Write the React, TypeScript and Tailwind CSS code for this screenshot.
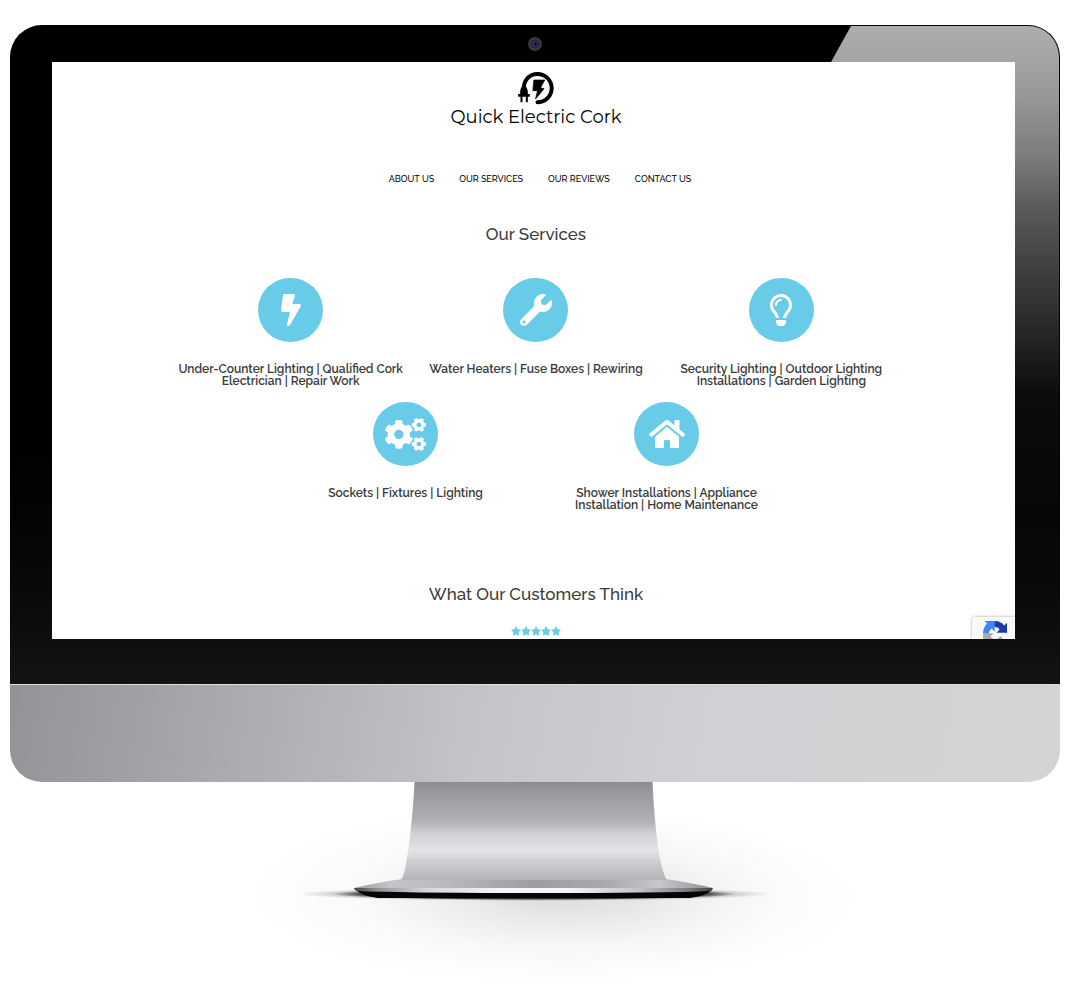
import React from "react";
import {
  FaBolt,
  FaCogs,
  FaHome,
  FaRegLightbulb,
  FaStar,
  FaWrench,
} from "react-icons/fa";

type Service = { icon: React.ReactNode; lines: string[] };

const primaryServices: Service[] = [
  {
    icon: <FaBolt size={32} />,
    lines: ["Under-Counter Lighting | Qualified Cork", "Electrician | Repair Work"],
  },
  { icon: <FaWrench size={32} />, lines: ["Water Heaters | Fuse Boxes | Rewiring"] },
  {
    icon: <FaRegLightbulb size={32} />,
    lines: ["Security Lighting | Outdoor Lighting", "Installations | Garden Lighting"],
  },
];

const secondaryServices: Service[] = [
  { icon: <FaCogs size={41} />, lines: ["Sockets | Fixtures | Lighting"] },
  {
    icon: <FaHome size={36} />,
    lines: ["Shower Installations | Appliance", "Installation | Home Maintenance"],
  },
];

const navItems = [
  { label: "ABOUT US", href: "#about" },
  { label: "OUR SERVICES", href: "#services" },
  { label: "OUR REVIEWS", href: "#reviews" },
  { label: "CONTACT US", href: "#contact" },
];

function LogoMark() {
  return (
    <svg viewBox="258 138 116 102" className="h-[34px] w-[39px]" aria-hidden="true">
      <path
        d="M281 192 C280 165 298 147 322 147 A42.500 42.500 0 1 1 322 232"
        fill="none"
        stroke="#000"
        strokeWidth="12"
        strokeLinecap="round"
      />
      <path d="M273 187h16l4 10v10h6v8h-6v17h-6v-17h-10v17h-6v-17h-7v-8h6v-10z" />
      <path d="M311 165h33l-13 23 11 3-26 31 6-25h-14z" stroke="#000" strokeWidth="2" />
    </svg>
  );
}

function ServiceItem({ icon, lines }: Service) {
  return (
    <li className="flex flex-col items-center text-center">
      <span className="flex h-16 w-[65px] items-center justify-center rounded-full bg-[#68cbe8] text-white">
        {icon}
      </span>
      <h3 className="mt-[21px] text-[12px] leading-3 font-semibold whitespace-nowrap text-[#3a3a3a]">
        {lines.map((line) => (
          <span key={line} className="block">
            {line}
          </span>
        ))}
      </h3>
    </li>
  );
}

function CaptchaBadge() {
  const arrow =
    "M64 31.955c-.002-.46-.012-.918-.032-1.373V4.439l-7.23 7.23C50.823 4.469 41.893 0 31.92 0 21.542 0 12.322 4.84 6.457 12.34l11.85 11.975a15.7 15.7 0 0 1 4.796-5.381c2.068-1.613 4.996-2.931 8.816-2.931.461 0 .817.054 1.079.155 4.732.374 8.834 2.985 11.249 6.775l-8.388 8.388c10.624-.042 22.626-.066 28.121.634z";
  return (
    <div className="absolute right-0 bottom-0 h-[22px] w-[43px] overflow-hidden rounded-tl-xs bg-[#f9f9f9] pt-1 pl-[11px] shadow-[0_0_3px_#a0a0a0]">
      <svg viewBox="0 0 64 64" className="size-6" aria-hidden="true">
        <path d={arrow} fill="#1c3aa9" />
        <path d={arrow} fill="#4285f4" transform="rotate(-90 32 32)" />
        <path d={arrow} fill="#ababab" transform="rotate(180 32 32)" />
      </svg>
    </div>
  );
}

function Website() {
  return (
    <div className="relative aspect-[963/577] overflow-hidden bg-white font-['Raleway','Lato',sans-serif] text-[#3a3a3a]">
      <div className="pl-[5px]">
        <header className="flex flex-col items-center pt-[9px]">
          <a href="#home" className="flex flex-col items-center text-black">
            <LogoMark />
            <span className="font-['Montserrat','Inter',sans-serif] text-[18px] leading-6 font-normal">
              Quick Electric Cork
            </span>
          </a>
          <nav className="mt-11 flex gap-[25px] pl-2 text-[9px] leading-3 font-medium text-black">
            {navItems.map((item) => (
              <a key={item.href} href={item.href}>
                {item.label}
              </a>
            ))}
          </nav>
        </header>
        <section id="services" className="mt-[37px]">
          <h2 className="text-center text-[17px] leading-6 font-medium">Our Services</h2>
          <ul className="mx-auto mt-8 grid max-w-[736px] grid-cols-3">
            {primaryServices.map((service) => (
              <ServiceItem key={service.lines[0]} {...service} />
            ))}
          </ul>
          <ul className="mx-auto mt-[15px] grid max-w-[522px] grid-cols-2">
            {secondaryServices.map((service) => (
              <ServiceItem key={service.lines[0]} {...service} />
            ))}
          </ul>
        </section>
        <section id="reviews" className="mt-[71px]">
          <h2 className="text-center text-[17px] leading-6 font-medium">What Our Customers Think</h2>
          <div className="mt-5 flex justify-center text-[#68cbe8]" role="img" aria-label="5 out of 5">
            {[1, 2, 3, 4, 5].map((n) => (
              <FaStar key={n} size={10} />
            ))}
          </div>
        </section>
      </div>
      <CaptchaBadge />
    </div>
  );
}

function Webcam() {
  return (
    <svg viewBox="0 0 14 14" className="size-3.5" aria-hidden="true">
      <circle cx="7" cy="7" r="7" fill="#39393b" />
      <circle cx="7" cy="7" r="4.500" fill="#2a2a2c" />
      <circle cx="7" cy="7" r="2.500" fill="#3a1a9c" />
      <circle cx="7.300" cy="7.300" r="1.200" fill="#05050c" />
    </svg>
  );
}

function Stand() {
  return (
    <svg viewBox="0 0 1070 208" className="block w-full" aria-hidden="true">
      <defs>
        <linearGradient id="neck" x1="0" y1="0" x2="0" y2="1">
          <stop offset="0" stopColor="#8b8c90" />
          <stop offset="0.05" stopColor="#949599" />
          <stop offset="0.4" stopColor="#b0b1b5" />
          <stop offset="0.52" stopColor="#cfd0d3" />
          <stop offset="0.7" stopColor="#e3e4e6" />
          <stop offset="0.8" stopColor="#cfd0d3" />
          <stop offset="1" stopColor="#b4b5b9" />
        </linearGradient>
        <linearGradient id="foot" x1="0" y1="0" x2="1" y2="0">
          <stop offset="0" stopColor="#9c9da1" />
          <stop offset="0.1" stopColor="#c4c5c8" />
          <stop offset="0.25" stopColor="#b9babd" />
          <stop offset="0.5" stopColor="#9d9ea2" />
          <stop offset="0.7" stopColor="#a8a9ad" />
          <stop offset="0.85" stopColor="#c6c7cb" />
          <stop offset="1" stopColor="#909195" />
        </linearGradient>
        <linearGradient id="rim" x1="0" y1="0" x2="1" y2="0">
          <stop offset="0" stopColor="#3d3e41" />
          <stop offset="0.06" stopColor="#8d8f93" />
          <stop offset="0.2" stopColor="#d5d6d9" />
          <stop offset="0.4" stopColor="#f4f5f6" />
          <stop offset="0.6" stopColor="#f4f5f6" />
          <stop offset="0.8" stopColor="#c0c1c5" />
          <stop offset="0.94" stopColor="#77787c" />
          <stop offset="1" stopColor="#3d3e41" />
        </linearGradient>
        <radialGradient id="halo">
          <stop offset="0" stopColor="#000" stopOpacity="0.12" />
          <stop offset="0.25" stopColor="#000" stopOpacity="0.07" />
          <stop offset="0.6" stopColor="#000" stopOpacity="0.022" />
          <stop offset="1" stopColor="#000" stopOpacity="0" />
        </radialGradient>
        <radialGradient id="contact-shadow">
          <stop offset="0" stopColor="#000" />
          <stop offset="0.72" stopColor="#000" stopOpacity="0.75" />
          <stop offset="0.85" stopColor="#000" stopOpacity="0.15" />
          <stop offset="1" stopColor="#000" stopOpacity="0" />
        </radialGradient>
      </defs>
      <ellipse cx="540" cy="112" rx="300" ry="90" fill="url(#halo)" />
      <ellipse cx="620" cy="118" rx="260" ry="90" fill="url(#halo)" opacity="0.4" />
      <ellipse cx="534" cy="112" rx="238" ry="7" fill="url(#contact-shadow)" />
      <path d="M356 108H712Q708 113 690 116H378Q360 113 356 108z" fill="#050505" />
      <path d="M354 106Q375 101 402 97H666Q692 101 713 106L712 108H355z" fill="url(#foot)" />
      <path d="M354 106H713L711 109Q660 111 534 111Q410 111 356 109z" fill="url(#rim)" />
      <path
        d="M414.500 0H652.500C655 50 659 73 662 85Q664 94 667 98H401Q404 94 406 82C410 60 413 30 414.500 0z"
        fill="url(#neck)"
      />
    </svg>
  );
}

export default function App() {
  return (
    <main className="min-h-screen overflow-hidden bg-white pt-[25px]">
      <div className="mx-2.5 overflow-hidden rounded-[32px]">
        <div className="relative bg-linear-to-b from-black from-40% to-[#131313] pr-[45px] pb-[45px] pl-[42px]">
          <div
            aria-hidden="true"
            className="absolute inset-y-px right-px w-[228px] rounded-tr-[31px] bg-[linear-gradient(to_bottom,#adadad,#a5a5a5_5%,#969696_11%,#7b7b7b_20%,#595959_28%,#424242_36%,#282828_46%,#0c0c0c_56%,#13131300_90%)] [clip-path:polygon(20px_0,100%_0,100%_100%,0_100%,0_36px)]"
          />
          <div className="relative flex h-[37px] items-center justify-center pl-[3px]">
            <Webcam />
          </div>
          <Website />
        </div>
        <div className="h-[98px] border-t border-[#dedfe0] bg-[linear-gradient(100deg,#929397,#a6a7ab_18%,#c4c5c9_45%,#cfd0d3_65%,#d3d4d5)]" />
      </div>
      <Stand />
    </main>
  );
}
